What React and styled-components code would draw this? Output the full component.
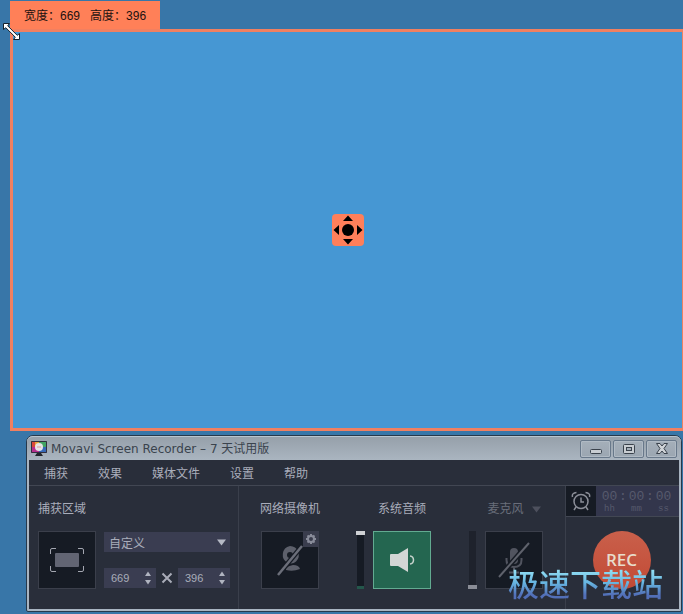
import { useState } from 'react';
import styled, { createGlobalStyle } from 'styled-components';

const GlobalStyle = createGlobalStyle`
    * {
        box-sizing: border-box;
    }

    body {
        margin: 0;
        background: #3876a8;
        color: #a9adba;
        font: 12px/20px 'Liberation Sans', 'Noto Sans CJK SC', sans-serif;
    }

    button,
    input,
    select {
        margin: 0;
        padding: 0;
        border: 0;
        border-radius: 0;
        color: inherit;
        font: inherit;
    }
`;

const Desktop = styled.main`
    display: flex;
    flex-direction: column;
    padding: 1px 0;
    overflow: hidden;
`;

const Capture = styled.section`
    position: relative;
    margin-left: 10px;
`;

const SizeTab = styled.div`
    display: flex;
    gap: 10px;
    width: 150px;
    height: 28px;
    padding: 5px 14px 3px;
    background: #ff8058;
    color: #1c1210;
    white-space: nowrap;
`;

const CaptureFrame = styled.div`
    display: flex;
    align-items: center;
    justify-content: center;
    height: 402px;
    border: 3px solid #f08061;
    border-right-width: 1px;
    background: #4697d3;
`;

const MoveHandle = styled.button`
    width: 32px;
    height: 32px;
    border-radius: 4px;
    background: #ff7f5a;
    cursor: move;

    svg {
        display: block;
    }
`;

const ResizeCursor = styled.svg`
    position: absolute;
    top: 21px;
    left: -8px;
`;

const Window = styled.section`
    position: relative;
    margin: 4px 1px 0 26px;
    padding: 0 2px 2px;
    border: 1px solid #26394c;
    border-radius: 7px 7px 2px 2px;
    background: #a8b4c1;
`;

const TitleBar = styled.header`
    display: flex;
    align-items: center;
    height: 24px;
    margin: 0 -2px;
    padding: 0 4px;
    border-top: 1px solid #bac4ce;
    border-radius: 6px 6px 0 0;
    background: linear-gradient(#96a0aa, #aab5c0);
`;

const Title = styled.h1`
    flex: 1;
    margin: 0 0 0 4px;
    color: #3a434d;
    font: 12px/20px 'DejaVu Sans', 'Noto Sans CJK SC', sans-serif;
`;

const WindowButtons = styled.div`
    display: flex;
    gap: 2px;
`;

const WindowButton = styled.button`
    display: flex;
    align-items: center;
    justify-content: center;
    width: 31px;
    height: 18px;
    border: 1px solid #68788a;
    border-radius: 2px;
    background: linear-gradient(#a5afb9, #9ba6b1);
    box-shadow: inset 0 0 0 1px #b0bac4;
`;

const MenuBar = styled.nav`
    display: flex;
    gap: 30px;
    height: 26px;
    padding: 4px 15px 1px;
    border-bottom: 1px solid #424753;
    background: #292e3a;
`;

const MenuItem = styled.button`
    background: none;
`;

const Panels = styled.div`
    display: flex;
    background: #292e3a;
`;

const RegionPanel = styled.section`
    flex: none;
    width: 210px;
    padding: 13px 8px 20px 9px;
    border-right: 1px solid #3a3f4b;
`;

const PanelTitle = styled.h2`
    margin: 0 0 12px;
    font: inherit;
`;

const RegionRow = styled.div`
    display: flex;
    gap: 8px;
`;

const Tile = styled.button`
    display: flex;
    align-items: center;
    justify-content: center;
    width: 58px;
    height: 58px;
    border: 1px solid ${({ $active }) => ($active ? '#62ab91' : '#3b3f4b')};
    background: ${({ $active }) => ($active ? '#246650' : '#161b24')};
`;

const RegionFields = styled.div`
    display: flex;
    flex: 1;
    flex-direction: column;
    justify-content: space-between;
    padding: 1px 0;
`;

const SelectBox = styled.div`
    display: flex;
    align-items: center;
    padding-right: 4px;
    background: #3a3d51;

    select {
        flex: 1;
        height: 20px;
        padding: 2px 0 0 5px;
        appearance: none;
        background: none;
    }
`;

const SizeRow = styled.div`
    display: flex;
    align-items: center;
    justify-content: space-between;
`;

const NumberBox = styled.div`
    display: flex;
    align-items: center;
    width: 52px;
    height: 20px;
    padding: 0 4px 0 7px;
    background: #3a3d51;

    input {
        flex: 1;
        width: 0;
        height: 20px;
        background: none;
        font-size: 11px;
    }
`;

const Spinner = styled.div`
    display: flex;
    flex-direction: column;
    gap: 4px;

    button {
        display: flex;
        background: none;
    }
`;

const DevicesPanel = styled.section`
    display: flex;
    flex: 1;
    justify-content: space-between;
    padding: 13px 22px 20px;
`;

const Device = styled.div`
    display: grid;
    grid-template-columns: ${({ $slider }) => ($slider ? '9px 58px' : '58px')};
    column-gap: 8px;
    row-gap: 12px;
`;

const DeviceTitle = styled.h2`
    display: flex;
    grid-column: -2;
    align-items: center;
    justify-self: center;
    gap: 8px;
    margin: 0;
    color: ${({ $muted }) => ($muted ? '#6a6e7a' : 'inherit')};
    font: inherit;
    white-space: nowrap;
`;

const DeviceTile = styled.div`
    position: relative;
    grid-column: -2;
`;

const SettingsButton = styled.button`
    position: absolute;
    top: 0;
    right: 0;
    display: flex;
    align-items: center;
    justify-content: center;
    width: 16px;
    height: 16px;
    background: #3a3d4d;
`;

const VolumeSlider = styled.input`
    width: 9px;
    height: 58px;
    appearance: none;
    background: linear-gradient(
            ${({ $muted }) => ($muted ? '#1e222c, #1e222c' : '#161b24 55px, #24574b 55px')}
        )
        center / 7px 100% no-repeat;
    direction: rtl;
    writing-mode: vertical-lr;

    &::-webkit-slider-thumb {
        width: 9px;
        height: 4px;
        appearance: none;
        background: ${({ $muted }) => ($muted ? '#8a8d96' : '#cfd1d4')};
    }
`;

const RecordPanel = styled.section`
    flex: none;
    width: 114px;
    border-left: 1px solid #3a3f4b;
`;

const Timer = styled.div`
    display: flex;
    height: 31px;
    border-bottom: 1px solid #424753;
    background: #33364c;
`;

const AlarmButton = styled.button`
    display: flex;
    align-items: center;
    justify-content: center;
    width: 30px;
    height: 30px;
    background: #161b24;
`;

const Clock = styled.div`
    display: flex;
    flex: 1;
    justify-content: center;
    padding: 4px 2px 0 0;
    color: #575a6d;
    font: 13px/14px 'Liberation Mono', monospace;
`;

const ClockPart = styled.div`
    display: flex;
    flex-direction: column;
    align-items: center;
    width: ${({ $separator }) => ($separator ? '11px' : '16px')};

    small {
        font-size: 9px;
        line-height: 10px;
    }
`;

const RecordArea = styled.div`
    display: flex;
    justify-content: center;
    padding: 14px 2px 0 0;
`;

const RecordButton = styled.button`
    width: 58px;
    height: 58px;
    border-radius: 50%;
    background: linear-gradient(#c9604b, #c24a35);
    color: #e8dccb;
    font: 600 17px/58px 'Open Sans', sans-serif;
`;

const Watermark = styled.div`
    position: absolute;
    right: 18px;
    bottom: 8px;
    background: linear-gradient(#8fdcf2 20%, #66b4e0 50%, #526fb8 80%);
    background-clip: text;
    color: transparent;
    font: 500 31px/40px 'Noto Sans CJK SC', sans-serif;
    pointer-events: none;
`;

const DownArrow = ({ color = '#b5b9c5' }) => (
    <svg width="9" height="7" viewBox="0 0 9 7">
        <path d="M0 0.5h9L4.5 6.5z" fill={color} />
    </svg>
);

const NumberField = ({ label, value, onChange }) => (
    <NumberBox>
        <input
            type="text"
            inputMode="numeric"
            aria-label={label}
            value={value}
            onChange={(e) => onChange(Number(e.target.value) || 0)}
        />
        <Spinner>
            <button type="button" aria-label={`${label} +`} onClick={() => onChange(value + 1)}>
                <svg width="8" height="5" viewBox="0 0 8 5">
                    <path d="M1 5L4 0.5 7 5z" fill="#b0b4c0" />
                </svg>
            </button>
            <button type="button" aria-label={`${label} -`} onClick={() => onChange(value - 1)}>
                <svg width="8" height="5" viewBox="0 0 8 5">
                    <path d="M1 0h6L4 4.5z" fill="#b0b4c0" />
                </svg>
            </button>
        </Spinner>
    </NumberBox>
);

const AppIcon = () => (
    <svg width="16" height="15" viewBox="0 0 16 15">
        <path d="M0 0h8v6H0z" fill="#d9473a" />
        <path d="M4 0h5v5H4z" fill="#e8a13a" />
        <path d="M8 0h8v6H8z" fill="#42a463" />
        <path d="M0 6h8v6H0z" fill="#b6308d" />
        <path d="M8 6h8v6H8z" fill="#3568b8" />
        <path d="M0.5 0.5h15v11h-15z" fill="none" stroke="#33303e" />
        <circle cx="8" cy="6" r="4" fill="#e6e4e6" />
        <path d="M6 5.5h4v1H6z" fill="#dc9b9b" />
        <path d="M6 12h4l2 3H4z" fill="#22252c" />
    </svg>
);

const MENU = ['捕获', '效果', '媒体文件', '设置', '帮助'];
const CLOCK = ['hh', 'mm', 'ss'];

const App = () => {
    const [width, setWidth] = useState(669);
    const [height, setHeight] = useState(396);
    const [volume, setVolume] = useState(100);
    const [micVolume, setMicVolume] = useState(0);

    return (
        <Desktop>
            <GlobalStyle />
            <Capture>
                <SizeTab>
                    <span>宽度：{width}</span>
                    <span>高度：{height}</span>
                </SizeTab>
                <CaptureFrame>
                    <MoveHandle type="button" aria-label="移动">
                        <svg width="32" height="32" viewBox="0 0 32 32">
                            <circle cx="16" cy="16" r="6" />
                            <path d="M16 1.5l5 5.5H11zM16 30.5l5-5.5H11zM1.5 16L7 11v10zM30.5 16L25 11v10z" />
                        </svg>
                    </MoveHandle>
                </CaptureFrame>
                <ResizeCursor width="19" height="19" viewBox="0 0 19 19">
                    <path
                        d="M1.5 1.5h6L5.7 3.8l9.5 9.5 2.3-1.8v6h-6l1.8-2.3-9.5-9.5-2.3 1.8z"
                        fill="#fff"
                        stroke="#14212c"
                    />
                </ResizeCursor>
            </Capture>

            <Window>
                <TitleBar>
                    <AppIcon />
                    <Title>Movavi Screen Recorder – 7 天试用版</Title>
                    <WindowButtons>
                        <WindowButton type="button" aria-label="最小化">
                            <svg width="12" height="11" viewBox="0 0 12 11">
                                <rect x="0.5" y="6.5" width="11" height="4" rx="1" fill="#c8cdd2" stroke="#3a424c" />
                            </svg>
                        </WindowButton>
                        <WindowButton type="button" aria-label="最大化">
                            <svg width="12" height="10" viewBox="0 0 12 10">
                                <rect x="0.5" y="0.5" width="11" height="9" rx="1" fill="#c8cdd2" stroke="#3a424c" />
                                <rect x="3.5" y="3.5" width="5" height="3" fill="#a5afb9" stroke="#3a424c" />
                            </svg>
                        </WindowButton>
                        <WindowButton type="button" aria-label="关闭">
                            <svg width="12" height="11" viewBox="0 0 12 11">
                                <path
                                    d="M0.5 0.5h3.5l2 2.5 2-2.5h3.5L8 5.5l3.5 5H8L6 8l-2 2.5H0.5L4 5.5z"
                                    fill="#cfd3d7"
                                    stroke="#3a424c"
                                />
                            </svg>
                        </WindowButton>
                    </WindowButtons>
                </TitleBar>

                <MenuBar>
                    {MENU.map((item) => (
                        <MenuItem key={item} type="button">
                            {item}
                        </MenuItem>
                    ))}
                </MenuBar>

                <Panels>
                    <RegionPanel>
                        <PanelTitle>捕获区域</PanelTitle>
                        <RegionRow>
                            <Tile type="button" aria-label="捕获区域">
                                <svg width="34" height="24" viewBox="0 0 34 24">
                                    <rect x="5" y="5" width="24" height="14" rx="1" fill="#626573" />
                                    <path
                                        d="M0.5 6V2q0-1.5 1.5-1.5h4M28 0.5h4q1.5 0 1.5 1.5v4M33.5 18v4q0 1.5-1.5 1.5h-4M6 23.5H2q-1.5 0-1.5-1.5v-4"
                                        fill="none"
                                        stroke="#a4a7b1"
                                    />
                                </svg>
                            </Tile>
                            <RegionFields>
                                <SelectBox>
                                    <select aria-label="区域大小" defaultValue="custom">
                                        <option value="custom">自定义</option>
                                    </select>
                                    <DownArrow />
                                </SelectBox>
                                <SizeRow>
                                    <NumberField label="宽度" value={width} onChange={setWidth} />
                                    <svg width="12" height="12" viewBox="0 0 12 12">
                                        <path d="M1.5 1.5l9 9M10.5 1.5l-9 9" stroke="#a9acb8" strokeWidth="2" />
                                    </svg>
                                    <NumberField label="高度" value={height} onChange={setHeight} />
                                </SizeRow>
                            </RegionFields>
                        </RegionRow>
                    </RegionPanel>

                    <DevicesPanel>
                        <Device>
                            <DeviceTitle>网络摄像机</DeviceTitle>
                            <DeviceTile>
                                <Tile type="button" aria-label="网络摄像机">
                                    <svg width="28" height="32" viewBox="0 0 28 32">
                                        <path
                                            d="M14 2a9 9 0 0 1 6 15.5q-3 3-8 1.5A9 9 0 0 1 14 2z"
                                            fill="#5d606b"
                                        />
                                        <circle cx="14" cy="11" r="3" fill="#161b24" />
                                        <path d="M10 24q2-2 7-3 6 0 7 4-7 3-14 1z" fill="#5d606b" />
                                        <path d="M2 31L26 2" stroke="#161b24" strokeWidth="5" />
                                        <path d="M2 31L26 2" stroke="#6b6e79" strokeWidth="2.5" />
                                    </svg>
                                </Tile>
                                <SettingsButton type="button" aria-label="设置">
                                    <svg width="12" height="12" viewBox="0 0 12 12">
                                        <circle cx="6" cy="6" r="3" fill="none" stroke="#898c9a" strokeWidth="2" />
                                        <path
                                            d="M6 1v2M6 9v2M1 6h2M9 6h2M2.5 2.5l1.4 1.4M8.1 8.1l1.4 1.4M9.5 2.5L8.1 3.9M3.9 8.1L2.5 9.5"
                                            stroke="#898c9a"
                                            strokeWidth="2"
                                        />
                                    </svg>
                                </SettingsButton>
                            </DeviceTile>
                        </Device>

                        <Device $slider>
                            <DeviceTitle>系统音频</DeviceTitle>
                            <VolumeSlider
                                type="range"
                                aria-label="系统音频音量"
                                value={volume}
                                onChange={(e) => setVolume(Number(e.target.value))}
                            />
                            <DeviceTile>
                                <Tile type="button" aria-label="系统音频" $active>
                                    <svg width="26" height="24" viewBox="0 0 26 24">
                                        <path d="M2 6h7L19 0v24L9 18H2q-1 0-1-1V7q0-1 1-1z" fill="#d3d6d5" />
                                        <path
                                            d="M21 8q3.5 0.5 3.5 4T21 16"
                                            fill="none"
                                            stroke="#c6d2cc"
                                            strokeWidth="1.5"
                                        />
                                    </svg>
                                </Tile>
                            </DeviceTile>
                        </Device>

                        <Device $slider>
                            <DeviceTitle $muted>
                                麦克风
                                <DownArrow color="#4d505d" />
                            </DeviceTitle>
                            <VolumeSlider
                                type="range"
                                aria-label="麦克风音量"
                                value={micVolume}
                                onChange={(e) => setMicVolume(Number(e.target.value))}
                                $muted
                            />
                            <DeviceTile>
                                <Tile type="button" aria-label="麦克风">
                                    <svg width="32" height="36" viewBox="0 0 32 36">
                                        <rect x="12" y="6" width="8" height="16" rx="4" fill="#51545f" />
                                        <path
                                            d="M8.5 16v2q0 7 7.5 7t7.5-7v-2M16 25v5M11 30.5h10"
                                            fill="none"
                                            stroke="#51545f"
                                            strokeWidth="2"
                                        />
                                        <path d="M1 35L31 1" stroke="#161b24" strokeWidth="5" />
                                        <path d="M1 35L31 1" stroke="#5f626c" strokeWidth="2" />
                                    </svg>
                                </Tile>
                            </DeviceTile>
                        </Device>
                    </DevicesPanel>

                    <RecordPanel>
                        <Timer>
                            <AlarmButton type="button" aria-label="定时">
                                <svg width="20" height="20" viewBox="0 0 20 20" fill="none" stroke="#8b8e98">
                                    <circle cx="10" cy="10.5" r="7" strokeWidth="1.5" />
                                    <path d="M10 6.5v4.5h3" strokeWidth="1.5" />
                                    <path
                                        d="M1.5 6q-1-4 4-4.5M18.5 6q1-4-4-4.5M5 16l-2 3M15 16l2 3"
                                        strokeWidth="1.5"
                                    />
                                </svg>
                            </AlarmButton>
                            <Clock>
                                {CLOCK.map((unit, index) => [
                                    index > 0 && (
                                        <ClockPart key={`${unit}-sep`} $separator>
                                            :
                                        </ClockPart>
                                    ),
                                    <ClockPart key={unit}>
                                        00
                                        <small>{unit}</small>
                                    </ClockPart>,
                                ])}
                            </Clock>
                        </Timer>
                        <RecordArea>
                            <RecordButton type="button">REC</RecordButton>
                        </RecordArea>
                    </RecordPanel>
                </Panels>
                <Watermark>极速下载站</Watermark>
            </Window>
        </Desktop>
    );
};

export default App;
